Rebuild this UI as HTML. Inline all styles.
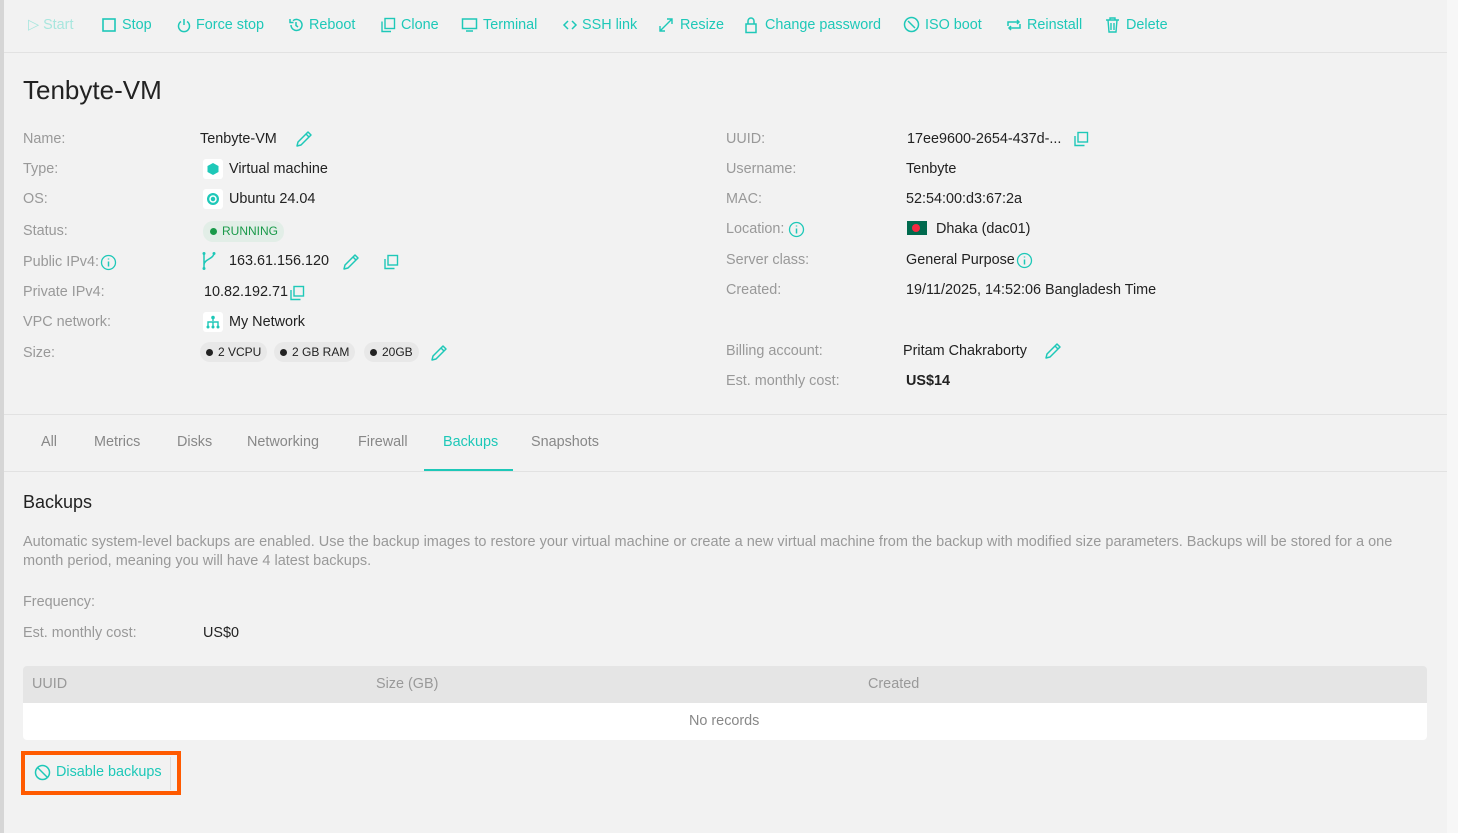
<!DOCTYPE html>
<html><head><meta charset="utf-8"><style>
*{margin:0;padding:0;box-sizing:border-box}
body{width:1458px;height:833px;background:#f7f7f7;font-family:"Liberation Sans",sans-serif;font-size:14.4px;color:#222;position:relative;overflow:hidden}
.main{position:absolute;left:0;top:0;width:1447px;height:833px;background:#f2f2f2;border-left:4px solid #d6d6d6}
.a{position:absolute;white-space:nowrap}
.t{color:#1ec8b8}
.l{color:#999}
svg{display:block}
.ic{position:absolute}
.hr{position:absolute;left:4px;width:1443px;height:1px;background:#e2e2e2}
.chip{position:absolute;height:20px;background:#e8e8e8;border-radius:10px;font-size:12px;line-height:20px;padding:0 6px 0 6px}
.chip b{display:inline-block;width:7px;height:7px;border-radius:50%;background:#222;margin-right:5px;vertical-align:0}
.sq{position:absolute;width:20px;height:20px;background:#fff;border-radius:3px}
</style></head><body>
<div class="main"></div>
<svg width="0" height="0" style="position:absolute"><defs><symbol id="pen" viewBox="0 0 18 18"><path d="M2 16l1-4L13 2l3 3L6 15z M11 4l3 3" fill="none" stroke="#1ec8b8" stroke-width="1.5" stroke-linejoin="round"/></symbol></defs></svg>
<!-- toolbar -->
<div class="a" style="left:28px;top:17px;color:#a8e6de">▷ Start</div>
<svg class="ic" style="left:101px;top:17px" width="16" height="16"><rect x="2" y="2" width="12" height="12" fill="none" stroke="#1ec8b8" stroke-width="1.6"/></svg>
<div class="a t" style="left:122px;top:17px">Stop</div>
<svg class="ic" style="left:176px;top:17px" width="16" height="16"><path d="M5 4.5A5.5 5.5 0 1 0 11 4.5M8 2v6" fill="none" stroke="#1ec8b8" stroke-width="1.5"/></svg>
<div class="a t" style="left:196px;top:17px">Force stop</div>
<svg class="ic" style="left:288px;top:17px" width="16" height="16"><path d="M3 8a5.5 5.5 0 1 0 2-4.3M2 2v3.5h3.5M8 5v3.5l2 1.5" fill="none" stroke="#1ec8b8" stroke-width="1.5"/></svg>
<div class="a t" style="left:309px;top:17px">Reboot</div>
<svg class="ic" style="left:380px;top:17px" width="16" height="16"><rect x="5" y="1.5" width="9.5" height="10" fill="none" stroke="#1ec8b8" stroke-width="1.4"/><path d="M2 4.5v10h9" fill="none" stroke="#1ec8b8" stroke-width="1.4"/></svg>
<div class="a t" style="left:401px;top:17px">Clone</div>
<svg class="ic" style="left:461px;top:17px" width="17" height="16"><rect x="1.5" y="2" width="14" height="9.5" fill="none" stroke="#1ec8b8" stroke-width="1.5"/><path d="M5 14h7" stroke="#1ec8b8" stroke-width="1.5"/></svg>
<div class="a t" style="left:483px;top:17px">Terminal</div>
<svg class="ic" style="left:562px;top:18px" width="16" height="14"><path d="M6 3L2 7l4 4M10 3l4 4-4 4" fill="none" stroke="#1ec8b8" stroke-width="1.5"/></svg>
<div class="a t" style="left:582px;top:17px">SSH link</div>
<svg class="ic" style="left:658px;top:17px" width="16" height="16"><path d="M2 14L14 2M9 2h5v5M2 9v5h5" fill="none" stroke="#1ec8b8" stroke-width="1.4"/></svg>
<div class="a t" style="left:680px;top:17px">Resize</div>
<svg class="ic" style="left:744px;top:16px" width="14" height="18"><rect x="2" y="8" width="10" height="8.5" fill="none" stroke="#1ec8b8" stroke-width="1.5"/><path d="M4 8V5a3 3 0 0 1 6 0v3" fill="none" stroke="#1ec8b8" stroke-width="1.5"/></svg>
<div class="a t" style="left:765px;top:17px">Change password</div>
<svg class="ic" style="left:903px;top:16px" width="17" height="17"><circle cx="8.5" cy="8.5" r="7" fill="none" stroke="#1ec8b8" stroke-width="1.5"/><path d="M5 5l7 7" stroke="#1ec8b8" stroke-width="1.5"/></svg>
<div class="a t" style="left:925px;top:17px">ISO boot</div>
<svg class="ic" style="left:1006px;top:17px" width="16" height="16"><path d="M2 9V5h11M11 3l2 2-2 2M14 7v4H3M5 13l-2-2 2-2" fill="none" stroke="#1ec8b8" stroke-width="1.5"/></svg>
<div class="a t" style="left:1027px;top:17px">Reinstall</div>
<svg class="ic" style="left:1105px;top:16px" width="15" height="18"><path d="M1 4h13M5 4V2h5v2M3 4l1 12h7l1-12M6 7v7M9 7v7" fill="none" stroke="#1ec8b8" stroke-width="1.4"/></svg>
<div class="a t" style="left:1126px;top:17px">Delete</div>
<div class="hr" style="top:52px"></div>

<div class="a" style="left:23px;top:75px;font-size:26px;color:#222">Tenbyte-VM</div>

<!-- left fields -->
<div class="a l" style="left:23px;top:131px">Name:</div>
<div class="a" style="left:200px;top:131px">Tenbyte-VM</div>
<svg class="ic" style="left:295px;top:130px" width="18" height="18"><use href="#pen"/></svg>
<div class="a l" style="left:23px;top:161px">Type:</div>
<div class="sq" style="left:203px;top:159px"></div><svg class="ic" style="left:206px;top:162px" width="14" height="14"><path d="M7 1l5.5 3v6L7 13 1.5 10V4z" fill="#1ec8b8"/></svg>
<div class="a" style="left:229px;top:161px">Virtual machine</div>
<div class="a l" style="left:23px;top:191px">OS:</div>
<div class="sq" style="left:203px;top:189px"></div><svg class="ic" style="left:206px;top:192px" width="14" height="14"><circle cx="7" cy="7" r="6" fill="#1ec8b8"/><circle cx="7" cy="7" r="3" fill="none" stroke="#fff" stroke-width="1.5"/></svg>
<div class="a" style="left:229px;top:191px">Ubuntu 24.04</div>
<div class="a l" style="left:23px;top:223px">Status:</div>
<div class="a" style="left:203px;top:221px;height:21px;width:81px;background:#e2eee7;border-radius:10px;font-size:12px;line-height:21px;color:#1a9a4a;padding-left:7px"><b style="display:inline-block;width:7px;height:7px;border-radius:50%;background:#1a9a4a;margin-right:5px"></b>RUNNING</div>
<div class="a l" style="left:23px;top:254px">Public IPv4:</div>
<svg class="ic" style="left:100px;top:254px" width="17" height="17"><circle cx="8.5" cy="8.5" r="7" fill="none" stroke="#1ec8b8" stroke-width="1.3"/><path d="M8.5 7.5v5M8.5 4.5v1" stroke="#1ec8b8" stroke-width="1.5"/></svg>
<svg class="ic" style="left:201px;top:251px" width="16" height="20"><path d="M3 2v16M13 2c0 6-10 6-10 12" fill="none" stroke="#1ec8b8" stroke-width="1.5"/><circle cx="3" cy="2.5" r="1.5" fill="#1ec8b8"/><circle cx="13" cy="2.5" r="1.5" fill="#1ec8b8"/><circle cx="3" cy="17.5" r="1.5" fill="#1ec8b8"/></svg>
<div class="a" style="left:229px;top:253px">163.61.156.120</div>
<svg class="ic" style="left:342px;top:253px" width="18" height="18"><use href="#pen"/></svg>
<svg class="ic" style="left:383px;top:254px" width="16" height="16"><rect x="5" y="1.5" width="9.5" height="9.5" fill="none" stroke="#1ec8b8" stroke-width="1.4"/><path d="M2 5v9.5h9.5" fill="none" stroke="#1ec8b8" stroke-width="1.4"/></svg>
<div class="a l" style="left:23px;top:284px">Private IPv4:</div>
<div class="a" style="left:204px;top:284px">10.82.192.71</div>
<svg class="ic" style="left:289px;top:285px" width="16" height="16"><rect x="5" y="1.5" width="9.5" height="9.5" fill="none" stroke="#1ec8b8" stroke-width="1.4"/><path d="M2 5v9.5h9.5" fill="none" stroke="#1ec8b8" stroke-width="1.4"/></svg>
<div class="a l" style="left:23px;top:314px">VPC network:</div>
<div class="sq" style="left:203px;top:312px"></div><svg class="ic" style="left:206px;top:315px" width="14" height="14"><path d="M7 1v5M2 11V7h10v4M7 7v4" fill="none" stroke="#1ec8b8" stroke-width="1.4"/><circle cx="7" cy="2.5" r="1.8" fill="#1ec8b8"/><circle cx="2" cy="12" r="1.5" fill="#1ec8b8"/><circle cx="7" cy="12" r="1.5" fill="#1ec8b8"/><circle cx="12" cy="12" r="1.5" fill="#1ec8b8"/></svg>
<div class="a" style="left:229px;top:314px">My Network</div>
<div class="a l" style="left:23px;top:345px">Size:</div>
<div class="chip" style="left:200px;top:342px"><b></b>2 VCPU</div>
<div class="chip" style="left:274px;top:342px"><b></b>2 GB RAM</div>
<div class="chip" style="left:364px;top:342px"><b></b>20GB</div>
<svg class="ic" style="left:430px;top:344px" width="18" height="18"><use href="#pen"/></svg>

<!-- right fields -->
<div class="a l" style="left:726px;top:131px">UUID:</div>
<div class="a" style="left:907px;top:131px">17ee9600-2654-437d-...</div>
<svg class="ic" style="left:1073px;top:131px" width="16" height="16"><rect x="5" y="1.5" width="9.5" height="9.5" fill="none" stroke="#1ec8b8" stroke-width="1.4"/><path d="M2 5v9.5h9.5" fill="none" stroke="#1ec8b8" stroke-width="1.4"/></svg>
<div class="a l" style="left:726px;top:161px">Username:</div>
<div class="a" style="left:906px;top:161px">Tenbyte</div>
<div class="a l" style="left:726px;top:191px">MAC:</div>
<div class="a" style="left:906px;top:191px">52:54:00:d3:67:2a</div>
<div class="a l" style="left:726px;top:221px">Location:</div>
<svg class="ic" style="left:788px;top:221px" width="17" height="17"><circle cx="8.5" cy="8.5" r="7" fill="none" stroke="#1ec8b8" stroke-width="1.3"/><path d="M8.5 7.5v5M8.5 4.5v1" stroke="#1ec8b8" stroke-width="1.5"/></svg>
<svg class="ic" style="left:907px;top:221px" width="20" height="14"><rect width="20" height="14" fill="#006a4e"/><circle cx="9" cy="7" r="4" fill="#f42a41"/></svg>
<div class="a" style="left:936px;top:221px">Dhaka (dac01)</div>
<div class="a l" style="left:726px;top:252px">Server class:</div>
<div class="a" style="left:906px;top:252px">General Purpose</div>
<svg class="ic" style="left:1016px;top:252px" width="17" height="17"><circle cx="8.5" cy="8.5" r="7" fill="none" stroke="#1ec8b8" stroke-width="1.3"/><path d="M8.5 7.5v5M8.5 4.5v1" stroke="#1ec8b8" stroke-width="1.5"/></svg>
<div class="a l" style="left:726px;top:282px">Created:</div>
<div class="a" style="left:906px;top:282px">19/11/2025, 14:52:06 Bangladesh Time</div>
<div class="a l" style="left:726px;top:343px">Billing account:</div>
<div class="a" style="left:903px;top:343px">Pritam Chakraborty</div>
<svg class="ic" style="left:1044px;top:342px" width="18" height="18"><use href="#pen"/></svg>
<div class="a l" style="left:726px;top:373px">Est. monthly cost:</div>
<div class="a" style="left:906px;top:373px;font-weight:bold">US$14</div>

<div class="hr" style="top:414px"></div>
<!-- tabs -->
<div class="a" style="left:41px;top:434px;color:#888">All</div>
<div class="a" style="left:94px;top:434px;color:#888">Metrics</div>
<div class="a" style="left:177px;top:434px;color:#888">Disks</div>
<div class="a" style="left:247px;top:434px;color:#888">Networking</div>
<div class="a" style="left:358px;top:434px;color:#888">Firewall</div>
<div class="a t" style="left:443px;top:434px">Backups</div>
<div class="a" style="left:531px;top:434px;color:#888">Snapshots</div>
<div class="a" style="left:424px;top:469px;width:89px;height:2px;background:#1ec8b8"></div>
<div class="hr" style="top:471px"></div>

<div class="a" style="left:23px;top:492px;font-size:18px">Backups</div>
<div class="a l" style="left:23px;top:533px;font-size:14.5px;line-height:19px;white-space:normal;width:1400px">Automatic system-level backups are enabled. Use the backup images to restore your virtual machine or create a new virtual machine from the backup with modified size parameters. Backups will be stored for a one month period, meaning you will have 4 latest backups.</div>
<div class="a l" style="left:23px;top:594px">Frequency:</div>
<div class="a l" style="left:23px;top:625px">Est. monthly cost:</div>
<div class="a" style="left:203px;top:625px">US$0</div>

<div class="a" style="left:23px;top:666px;width:1404px;height:37px;background:#e5e5e5;border-radius:4px 4px 0 0"></div>
<div class="a l" style="left:32px;top:676px">UUID</div>
<div class="a l" style="left:376px;top:676px">Size (GB)</div>
<div class="a l" style="left:868px;top:676px">Created</div>
<div class="a" style="left:23px;top:703px;width:1404px;height:37px;background:#fff;border-radius:0 0 4px 4px"></div>
<div class="a" style="left:689px;top:713px;color:#888">No records</div>

<div class="a" style="left:21px;top:751px;width:160px;height:44px;border:4px solid #ff5a00"></div>
<div class="a" style="left:26px;top:757px;width:145px;height:33px;border-right:1px solid #ddd"></div>
<svg class="ic" style="left:34px;top:764px" width="17" height="17"><circle cx="8.5" cy="8.5" r="7" fill="none" stroke="#1ec8b8" stroke-width="1.5"/><path d="M3.5 3.5l10 10" stroke="#1ec8b8" stroke-width="1.5"/></svg>
<div class="a t" style="left:56px;top:764px">Disable backups</div>
</body></html>
